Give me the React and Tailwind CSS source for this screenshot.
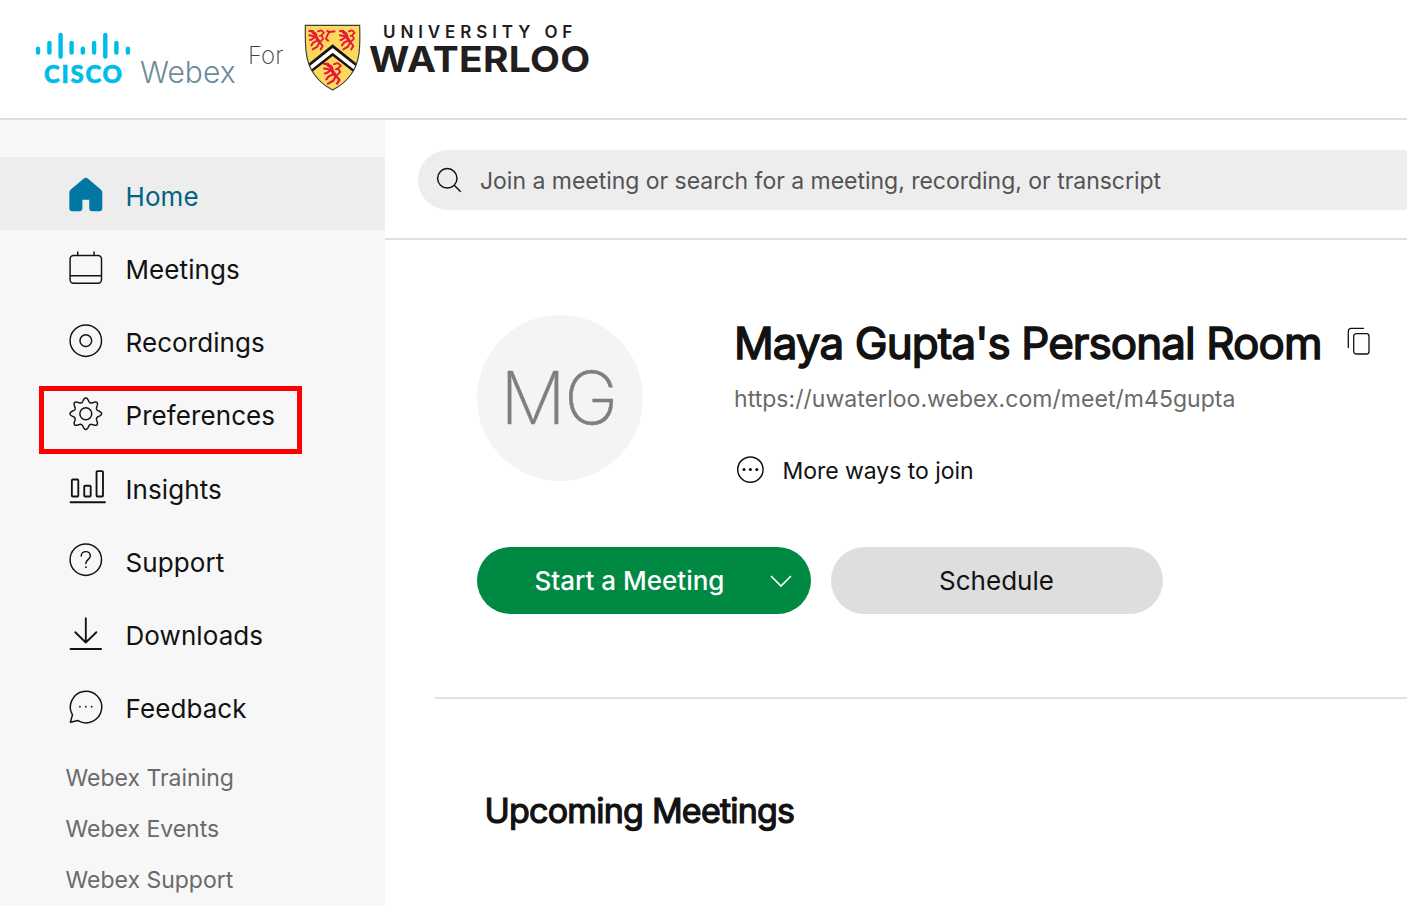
const stroke = {
  fill: 'none',
  stroke: '#121212',
  strokeWidth: 1.5,
  strokeLinecap: 'round',
  strokeLinejoin: 'round',
};

function gearPath() {
  const pts = [];
  const teeth = 8;
  const n = 240;
  for (let i = 0; i < n; i++) {
    const a = (i / n) * Math.PI * 2;
    const lobe = (1 + Math.cos(a * teeth)) / 2;
    const r = 12 + 4.2 * Math.pow(lobe, 1.25);
    pts.push(`${(20 + r * Math.cos(a)).toFixed(2)} ${(20 + r * Math.sin(a)).toFixed(2)}`);
  }
  return `M${pts.join('L')}Z`;
}

const icons = {
  home: (
    <path
      fill="#0277a3"
      d="M17.7 3.700a3.600 3.600 0 0 1 4.600 0L35.400 14.600a4.200 4.200 0 0 1 1.500 3.200V34.500a2.500 2.500 0 0 1-2.500 2.500H26A2.500 2.500 0 0 1 23.500 34.500v-9.300h-7V34.500a2.500 2.500 0 0 1-2.500 2.500H5.600A2.500 2.500 0 0 1 3.100 34.500V17.800a4.200 4.200 0 0 1 1.500-3.200Z"
    />
  ),
  meetings: (
    <g {...stroke}>
      <rect x="3.900" y="7.500" width="32.200" height="28.400" rx="3.500" />
      <path d="M4 28.200h32M11.700 7.300V4M28.500 7.300V4" />
    </g>
  ),
  recordings: (
    <g {...stroke}>
      <circle cx="20" cy="20" r="16.100" />
      <circle cx="20" cy="20" r="6" />
    </g>
  ),
  preferences: (
    <g {...stroke}>
      <path d={gearPath()} />
      <circle cx="20" cy="20" r="6.100" />
    </g>
  ),
  insights: (
    <g {...stroke} strokeWidth="1.900">
      <rect x="5.700" y="12.600" width="6.600" height="17.400" rx="1" />
      <rect x="18.400" y="19" width="6.600" height="11" rx="1" />
      <rect x="31" y="4" width="6.600" height="26" rx="1" />
      <path d="M4.400 36h35.200" strokeWidth="2.100" />
    </g>
  ),
  support: (
    <g {...stroke}>
      <circle cx="20" cy="20" r="16.100" />
      <path d="M15.300 16.200c0-2.600 2-4.500 4.700-4.500s4.600 1.900 4.600 4.400c0 3.800-4.600 3.900-4.600 7.700" />
      <circle cx="20" cy="27.600" r=".6" fill="#121212" strokeWidth=".6" />
    </g>
  ),
  downloads: (
    <g {...stroke} strokeWidth="1.900">
      <path d="M20 4.200v24.800M9.200 18.500 20 29l10.800-10.500" />
      <path d="M4.400 35.700h31.200" strokeWidth="2.100" />
    </g>
  ),
  feedback: (
    <g {...stroke}>
      <path d="M4.200 36 6.300 28.400A16.100 16.100 0 1 1 12 34.200Z" />
      <g fill="#121212" stroke="none">
        <circle cx="14" cy="20" r=".9" />
        <circle cx="20" cy="20" r=".9" />
        <circle cx="26" cy="20" r=".9" />
      </g>
    </g>
  ),
};

const nav = [
  { id: 'home', label: 'Home', active: true },
  { id: 'meetings', label: 'Meetings' },
  { id: 'recordings', label: 'Recordings' },
  { id: 'preferences', label: 'Preferences', marked: true },
  { id: 'insights', label: 'Insights' },
  { id: 'support', label: 'Support' },
  { id: 'downloads', label: 'Downloads' },
  { id: 'feedback', label: 'Feedback' },
];

const links = ['Webex Training', 'Webex Events', 'Webex Support'];

const bars = [
  [38, 46.500, 54.700], [49.400, 40.700, 54.700], [60.600, 32.700, 58.700],
  [71.600, 40.700, 54.700], [82.800, 46.500, 54.700], [94.100, 40.700, 54.700],
  [105.300, 32.700, 58.700], [116.400, 40.700, 54.700], [127.900, 46.500, 54.700],
];

function Lion({ transform }) {
  return (
    <g transform={transform} fill="none" stroke="#e4173e" strokeLinecap="round" strokeLinejoin="round">
      <path strokeWidth="9" d="M12 8 20 14 24 26 32 38" />
      <path strokeWidth="6" d="M2 5 12 5M2 18 14 20M20 22 10 30 4 32M26 34 14 40 8 48M32 40 26 52 12 60M36 42 42 50 36 60" />
      <path strokeWidth="5" d="M36 36 44 28 38 18 46 10 38 3 28 6M40 18 33 20" />
    </g>
  );
}

function Shield() {
  const outline = 'M22 22H185C187 88 186 132 160 168 146 188 128 204 104 216 80 204 62 188 48 168 22 132 21 88 22 22Z';
  return (
    <svg viewBox="0 0 210 240" className="h-20 w-[70px] shrink-0">
      <defs>
        <clipPath id="shield"><path d={outline} /></clipPath>
      </defs>
      <path d={outline} fill="#fcd95c" />
      <g clipPath="url(#shield)">
        <Lion transform="translate(32 34)" />
        <path d="M86 38 94 42 88 52 84 62 92 70M94 42 112 40" stroke="#e4173e" strokeWidth="6" fill="none" />
        <Lion transform="translate(124 34)" />
        <Lion transform="translate(76 132) scale(1.150 1.080)" />
        <path d="M10 154 104 79 198 154V187L104 114 10 187Z" fill="#191516" />
        <path d="M10 164 104 90 198 164V178L104 104 10 178Z" fill="#fff" />
      </g>
      <path d={outline} fill="none" stroke="#3f3c38" strokeWidth="3.500" />
    </svg>
  );
}

function Header() {
  return (
    <header className="flex h-[120px] shrink-0 items-start border-b-2 border-[#dedede] bg-white">
      <div className="ml-9 mt-8 flex w-[95px] flex-col">
        <svg viewBox="36 32 95 28" className="h-7 w-[95px]">
          {bars.map(([x, y1, y2]) => (
            <rect key={x} x={x - 2.200} y={y1} width="4.400" height={y2 - y1} rx="2.200" fill="#00bceb" />
          ))}
        </svg>
        <span className="ml-[8px] mt-[2px] font-['Lato',sans-serif] text-[24px] font-black leading-[24px] tracking-[1.7px] text-[#00bceb] [-webkit-text-stroke:0.600px_#00bceb]">CISCO</span>
      </div>
      <span className="ml-[9px] mt-[54px] w-[108px] text-[30px] font-light leading-[36px] tracking-[0px] text-[#6c8b9c]">Webex</span>
      <span className="mt-[41px] w-[50px] text-[24px] font-extralight leading-[30px] text-[#444]">For</span>
      <div className="mt-[18px] flex">
        <Shield />
        <div className="flex flex-col whitespace-nowrap text-[#221e1f]">
          <span className="ml-[15px] mt-[4px] text-[17px] font-semibold leading-[20px] tracking-[4.900px]">UNIVERSITY OF</span>
          <span className="ml-[1px] mt-px origin-left scale-x-[1.08] text-[36px] font-bold leading-[32px] tracking-[0.300px]">WATERLOO</span>
        </div>
      </div>
    </header>
  );
}

function Sidebar() {
  return (
    <aside className="flex w-[385px] shrink-0 flex-col bg-[#f7f7f7] pt-[37px]">
      <nav className="flex flex-col">
        {nav.map((item) => (
          <a
            key={item.id}
            className={`relative flex h-[73.100px] items-start pl-[66px] ${item.active ? 'bg-[#ededed] text-[#046283]' : 'text-[#121212]'}`}
          >
            <svg viewBox="-0.3 -0.2 41 41" className="mt-[18px] size-10 overflow-visible">{icons[item.id]}</svg>
            <span className="ml-[19.500px] mt-[20.150px] text-[26px] leading-[40px] tracking-[0.080px]">{item.label}</span>
            {item.marked && <span className="absolute left-[39px] top-[10px] h-[68px] w-[263px] border-[5px] border-[#ff0000]" />}
          </a>
        ))}
      </nav>
      <div className="mt-[11.500px] flex flex-col pl-[65.500px] text-[23px] text-[#6a6a6a]">
        {links.map((link) => (
          <a key={link} className="h-[51px] leading-[51px]">{link}</a>
        ))}
      </div>
    </aside>
  );
}

function Main() {
  return (
    <main className="flex min-w-0 flex-1 flex-col bg-white">
      <div className="h-[120px] shrink-0 border-b-2 border-[#e0e0e0] pl-[33px] pt-[30px]">
        <div className="flex h-[60px] items-center rounded-l-full bg-[#ededed] pl-[17px]">
          <svg viewBox="0 0 28 28" className="size-7" fill="none" stroke="#121212" strokeWidth="1.500">
            <circle cx="12.300" cy="12.300" r="9.700" />
            <path d="m19.200 19.200 6.500 6.500" />
          </svg>
          <span className="ml-[17px] mt-[2px] whitespace-nowrap text-[23px] tracking-[-0.025px] text-[#535353]">
            Join a meeting or search for a meeting, recording, or transcript
          </span>
        </div>
      </div>
      <div className="flex h-[307px] shrink-0 pl-[91.500px] pt-[75px]">
        <div className="flex size-[166px] shrink-0 items-center justify-center rounded-full bg-[#f4f4f4] pr-[2px] text-[73px] font-extralight tracking-[-1.500px] text-[#7f7f7f] [-webkit-text-stroke:0.400px_#7f7f7f]">MG</div>
        <div className="ml-[91.500px] flex flex-col whitespace-nowrap">
          <div className="flex items-start">
            <h1 className="w-[588px] text-[44px] font-normal leading-[57px] tracking-[-0.930px] text-[#121212] [-webkit-text-stroke:1.500px_#121212]">Maya Gupta's Personal Room</h1>
            <svg viewBox="0 0 24 28" className="ml-[25px] mt-[12px] h-7 w-6" fill="none" stroke="#121212" strokeWidth="1.300" strokeLinecap="round">
              <path d="M1.300 20.500V4.200A2.800 2.800 0 0 1 4.100 1.400H16.500" />
              <rect x="6.700" y="6.700" width="15.300" height="20.300" rx="2.600" />
            </svg>
          </div>
          <a className="mt-px text-[23px] leading-[52px] tracking-[0.040px] text-[#6a6a6a]">https://uwaterloo.webex.com/meet/m45gupta</a>
          <div className="mt-[24px] flex h-[42px] items-center">
            <svg viewBox="0 0 28 28" className="ml-[2px] size-7">
              <circle cx="14.400" cy="13.600" r="12.700" fill="none" stroke="#121212" strokeWidth="1.500" />
              <circle cx="8" cy="13.600" r="1.500" />
              <circle cx="14.400" cy="13.600" r="1.500" />
              <circle cx="20.800" cy="13.600" r="1.500" />
            </svg>
            <span className="ml-[18.500px] mt-[2px] text-[23px] tracking-[-0.040px] text-[#121212]">More ways to join</span>
          </div>
        </div>
      </div>
      <div className="flex shrink-0 gap-5 pl-[91.500px]">
        <button className="flex h-[67px] w-[334px] items-center rounded-full bg-[#008943] pl-[58px] text-[26px] font-medium text-white">
          <span className="whitespace-nowrap">Start a Meeting</span>
          <svg viewBox="0 0 24 16" className="ml-auto mr-[18px] h-4 w-6" fill="none" stroke="#fff" strokeWidth="1.700">
            <path d="m2 3 10 10L22 3" />
          </svg>
        </button>
        <button className="h-[67px] w-[332px] rounded-full bg-[#dedede] text-[26px] text-[#121212]">Schedule</button>
      </div>
      <section className="ml-[50px] mt-[83px] border-t-2 border-[#e0e0e0] pl-[49.500px] pt-[88px]">
        <h2 className="text-[34px] font-normal leading-[48px] tracking-[-0.780px] text-[#121212] [-webkit-text-stroke:1.200px_#121212]">Upcoming Meetings</h2>
      </section>
    </main>
  );
}

export default function App() {
  return (
    <div className="flex h-[906px] w-[1407px] flex-col overflow-hidden bg-white font-['Inter',sans-serif]">
      <Header />
      <div className="flex min-h-0 flex-1">
        <Sidebar />
        <Main />
      </div>
    </div>
  );
}
